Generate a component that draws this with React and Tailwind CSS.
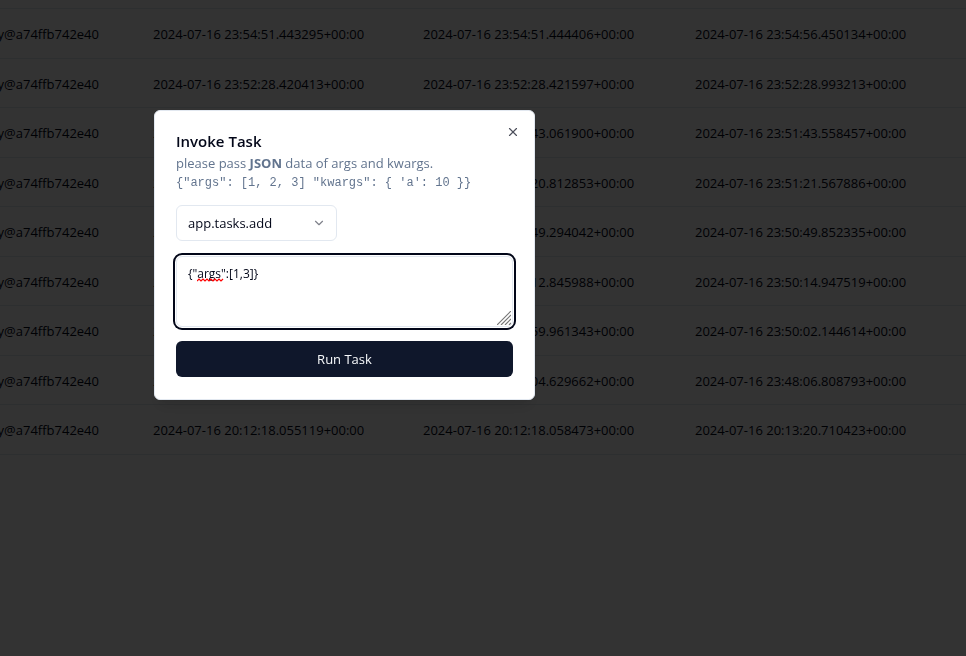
import { useState } from "react";
import { ChevronDown, X } from "lucide-react";

const WORKER = "celery@a74ffb742e40";

const rows = [
  ["2024-07-16 23:54:51.443295+00:00", "2024-07-16 23:54:51.444406+00:00", "2024-07-16 23:54:56.450134+00:00"],
  ["2024-07-16 23:52:28.420413+00:00", "2024-07-16 23:52:28.421597+00:00", "2024-07-16 23:52:28.993213+00:00"],
  ["2024-07-16 23:51:43.060735+00:00", "2024-07-16 23:51:43.061900+00:00", "2024-07-16 23:51:43.558457+00:00"],
  ["2024-07-16 23:51:20.811690+00:00", "2024-07-16 23:51:20.812853+00:00", "2024-07-16 23:51:21.567886+00:00"],
  ["2024-07-16 23:50:49.292871+00:00", "2024-07-16 23:50:49.294042+00:00", "2024-07-16 23:50:49.852335+00:00"],
  ["2024-07-16 23:50:12.844810+00:00", "2024-07-16 23:50:12.845988+00:00", "2024-07-16 23:50:14.947519+00:00"],
  ["2024-07-16 23:49:59.960174+00:00", "2024-07-16 23:49:59.961343+00:00", "2024-07-16 23:50:02.144614+00:00"],
  ["2024-07-16 23:48:04.628490+00:00", "2024-07-16 23:48:04.629662+00:00", "2024-07-16 23:48:06.808793+00:00"],
  ["2024-07-16 20:12:18.055119+00:00", "2024-07-16 20:12:18.058473+00:00", "2024-07-16 20:13:20.710423+00:00"],
];

function TaskTable() {
  return (
    <table className="mt-2 w-full table-fixed border-collapse border-t border-slate-200 text-[13px] leading-5">
      <colgroup>
        <col className="w-[153px]" />
        <col className="w-[270px]" />
        <col className="w-[272px]" />
        <col />
      </colgroup>
      <tbody>
        {rows.map((times) => (
          <tr key={times[0]} className="border-b border-slate-200 odd:h-[50px] even:h-[49px]">
            <td className="p-0 pt-px">
              <div className="flex w-[99px] justify-end overflow-hidden">{WORKER}</div>
            </td>
            {times.map((time) => (
              <td key={time} className="p-0 pt-px whitespace-nowrap">
                {time}
              </td>
            ))}
          </tr>
        ))}
      </tbody>
    </table>
  );
}

function InvokeDialog() {
  const [payload, setPayload] = useState('{"args":[1,3]}');
  return (
    <div
      role="dialog"
      aria-labelledby="invoke-title"
      className="fixed top-[110px] left-[154px] flex w-[381px] flex-col rounded-md border border-slate-200 bg-white px-[21px] pt-5 pb-[22px] shadow-lg"
    >
      <h2 id="invoke-title" className="text-[15px] leading-5 font-semibold">
        Invoke Task
      </h2>
      <p className="pt-0.5 text-[13px] leading-5 text-slate-500">
        please pass <b>JSON</b> data of args and kwargs.
      </p>
      <code className="font-['Liberation_Mono',monospace] text-[12px] leading-5 whitespace-nowrap text-slate-500">
        {`{"args": [1, 2, 3] "kwargs": { 'a': 10 }}`}
      </code>

      <div className="relative mt-3 w-[161px]">
        <select
          aria-label="Task"
          className="h-9 w-full appearance-none rounded-md border border-slate-200 bg-white px-[11px] pt-0.5 text-[13px]"
        >
          <option>app.tasks.add</option>
        </select>
        <ChevronDown className="pointer-events-none absolute top-[11px] right-[11px] size-[14px] text-slate-950 opacity-50" />
      </div>

      <div className="relative mt-[15px]">
        <textarea
          aria-label="Task payload"
          spellCheck={false}
          value={payload}
          onChange={(e) => setPayload(e.target.value)}
          className="block h-[71px] w-full resize-none rounded-md border border-slate-200 bg-white px-[11px] py-2 text-[12px] leading-[18px] ring-2 ring-slate-950 ring-offset-1 outline-none"
        />
        <svg className="pointer-events-none absolute top-[22px] left-[21px] h-1 w-[27px]" viewBox="0 0 27 4" fill="none" stroke="#f00" strokeWidth="1.2">
          <path d="M0 3l2-2 2 2 2-2 2 2 2-2 2 2 2-2 2 2 2-2 2 2 2-2 2 2 2-2" />
        </svg>
        <svg className="pointer-events-none absolute right-[2px] bottom-[2px] size-[14px]" viewBox="0 0 14 14" fill="none" stroke="#777" strokeWidth="1.2">
          <path d="M0 14L14 0M4 14L14 4M8 14l6-6M12 14l2-2" />
        </svg>
      </div>

      <button type="button" className="mt-[14px] h-9 rounded-md bg-slate-900 pt-0.5 text-[13px] text-slate-50">
        Run Task
      </button>

      <button type="button" aria-label="Close" className="absolute top-[14px] right-[14px] opacity-70">
        <X className="size-[14px]" />
      </button>
    </div>
  );
}

export default function App() {
  return (
    <div className="min-h-screen overflow-hidden bg-white font-['Open_Sans','Noto_Sans',sans-serif] text-slate-950">
      <TaskTable />
      <div className="fixed inset-0 bg-black/80" />
      <InvokeDialog />
    </div>
  );
}
